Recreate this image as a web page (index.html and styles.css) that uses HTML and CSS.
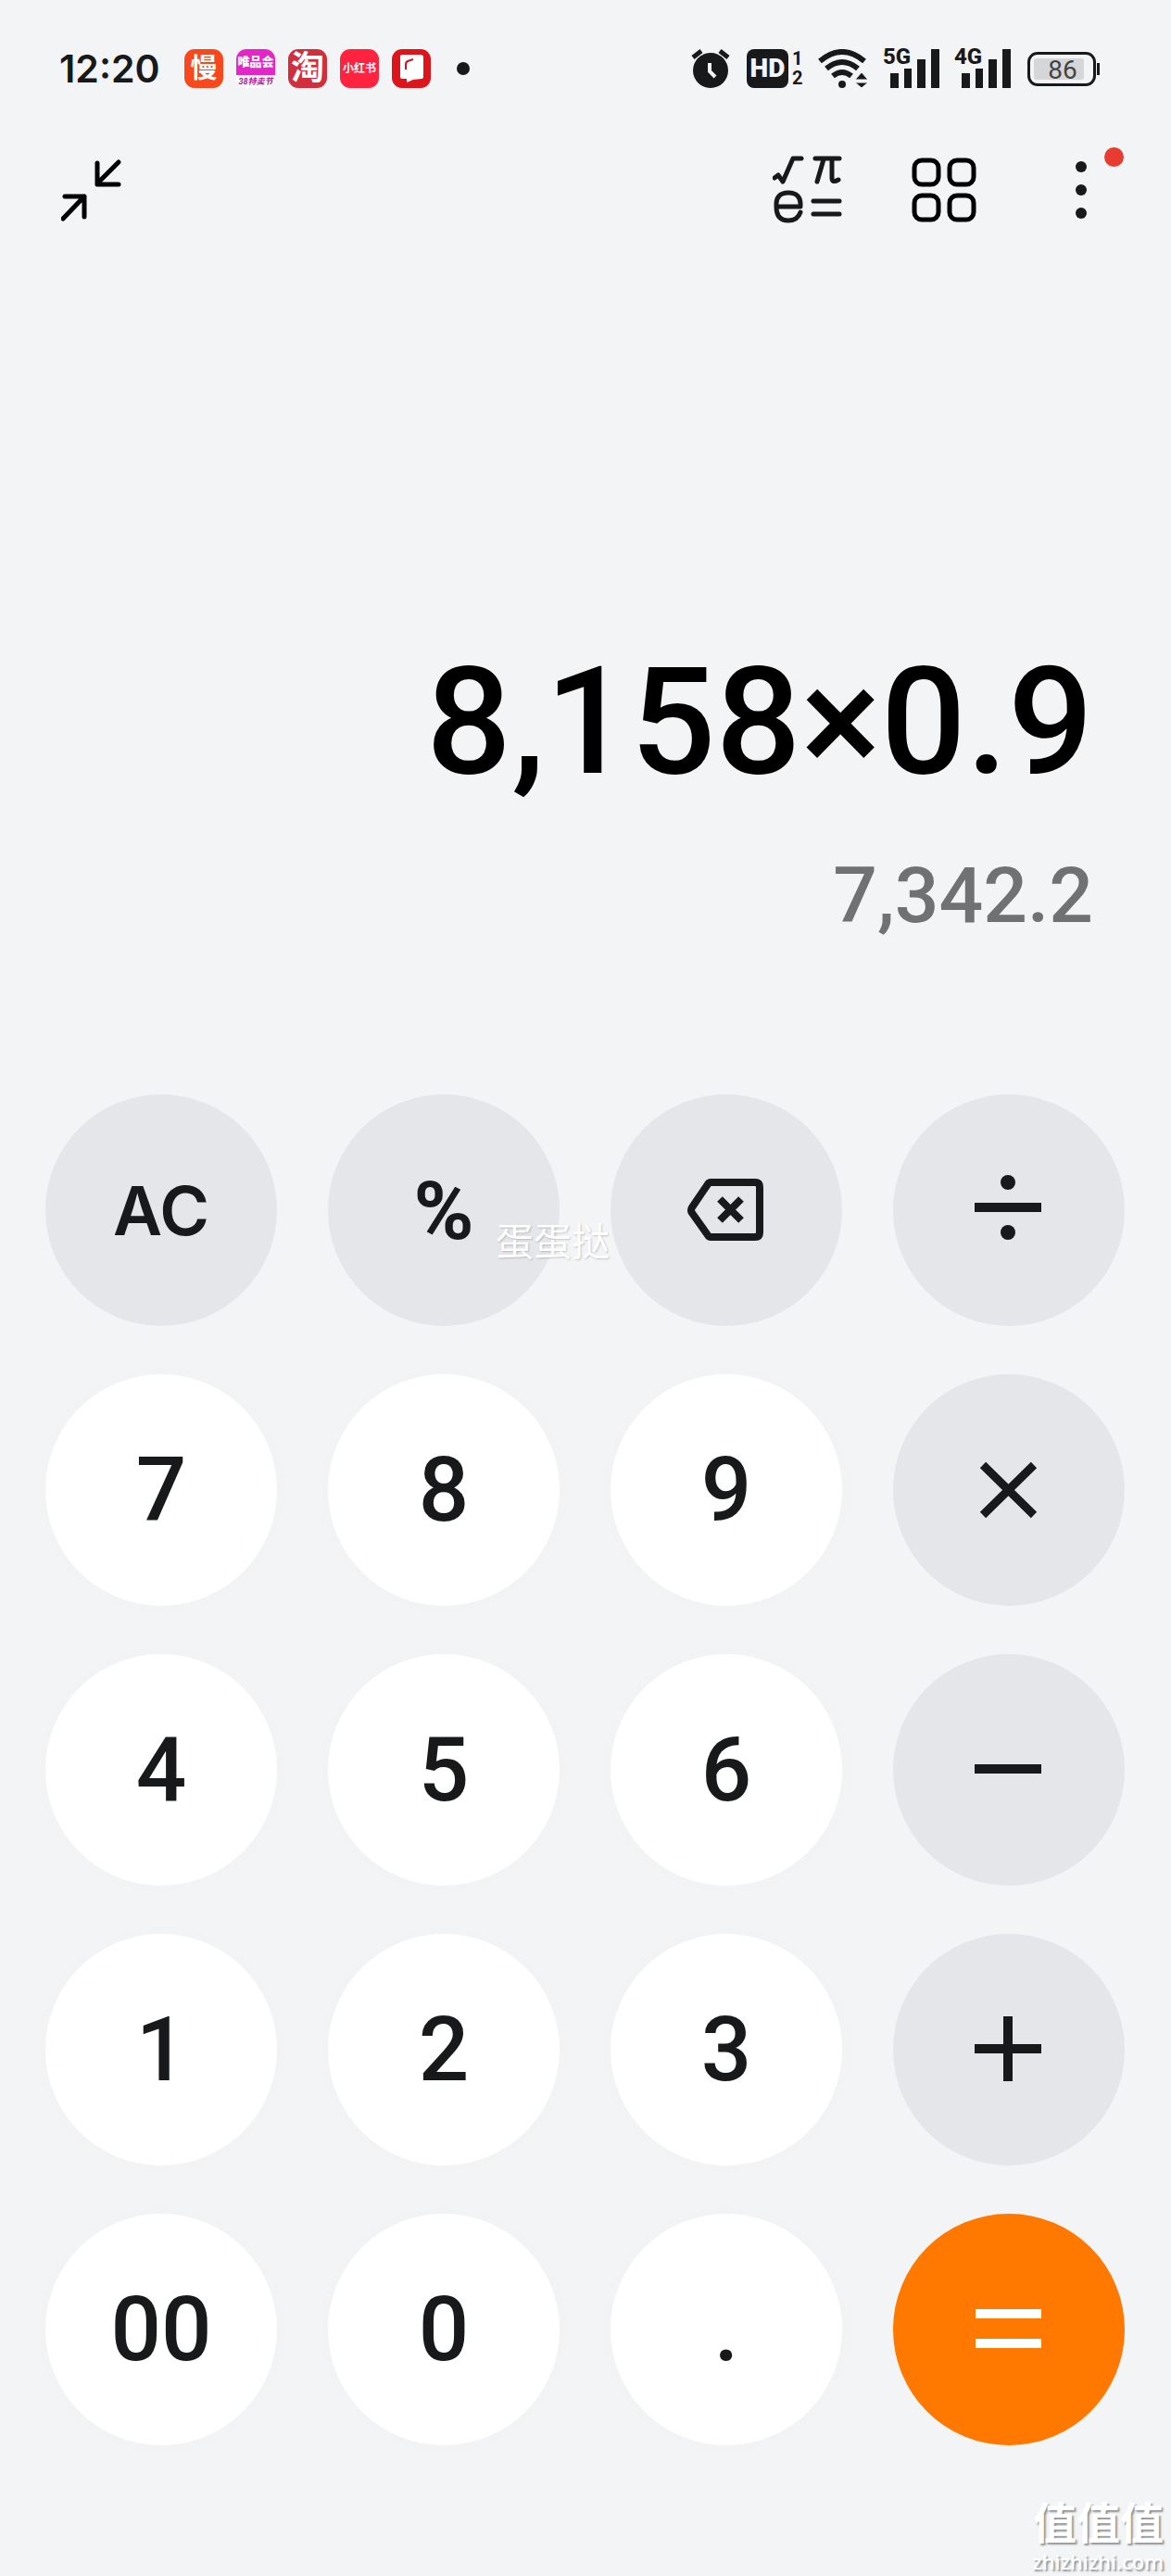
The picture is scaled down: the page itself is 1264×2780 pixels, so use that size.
FILE: index.html
```html
<!DOCTYPE html>
<html lang="zh-CN">
<head>
    <meta charset="UTF-8">
    <meta name="viewport" content="width=device-width, initial-scale=1">
    <title>计算器</title>
    <link rel="stylesheet" href="styles.css">
</head>
<body>
    <div class="screen">
        <header class="status">
            <div class="status-left">
                <span class="clock">12:20</span>
                <div class="apps">
                    <span class="app app-man">慢</span>
                    <span class="app app-vip"><b>唯品会</b><i>38特卖节</i></span>
                    <span class="app app-tao">淘</span>
                    <span class="app app-xhs">小红书</span>
                    <span class="app app-book">
                        <svg width="42" height="42" viewBox="0 0 42 42"><path d="M9 8q0-2 2-2h20q3 0 3 3v21q0 2-2 2l-9 1-7 3v-4H11q-2 0-2-2z" fill="#fff"/><path d="M15 22v-6q0-2 2-3l6-2" fill="none" stroke="#c81a20" stroke-width="2"/></svg>
                    </span>
                </div>
                <span class="more-dot"></span>
            </div>
            <div class="status-right">
                <!-- alarm -->
                <svg width="42" height="42" viewBox="0 0 42 42">
                    <circle cx="21" cy="23" r="19" fill="#17191a"/>
                    <path d="M2 9l9-7M40 9l-9-7" stroke="#17191a" stroke-width="5"/>
                    <path d="M20 15v9l6 6" fill="none" stroke="#f2f4f6" stroke-width="4"/>
                </svg>
                <!-- HD -->
                <div class="hd">
                    <span class="hd-box">HD</span>
                    <span class="hd-sim"><span>1</span><span>2</span></span>
                </div>
                <!-- wifi -->
                <svg width="54" height="42" viewBox="0 0 54 42">
                    <g fill="none" stroke="#17191a" stroke-width="6">
                        <path d="M2 13Q26-7 50 13"/>
                        <path d="M9 21q17-14 34 0"/>
                        <path d="M16 29q10-8 20 0"/>
                    </g>
                    <circle cx="26" cy="38" r="4" fill="#17191a"/>
                    <path d="M47 25l7 8H40zM47 42l7-6H40z" fill="#17191a" stroke="#f2f4f6" stroke-width="1"/>
                </svg>
                <div class="signal">
                    <span class="net">5G</span>
                    <svg width="54" height="42" viewBox="0 0 54 42"><path d="M1 26h9v16H1zM16 21h8v21h-8zM30 11h9v31h-9zM45 0h9v42h-9z" fill="#17191a"/></svg>
                </div>
                <div class="signal">
                    <span class="net">4G</span>
                    <svg width="54" height="42" viewBox="0 0 54 42"><path d="M1 26h9v16H1zM16 21h8v21h-8zM30 11h9v31h-9zM45 0h9v42h-9z" fill="#17191a"/></svg>
                </div>
                <div class="battery"><span class="battery-level">86</span></div>
            </div>
        </header>

        <nav class="toolbar">
            <button type="button" class="tool" aria-label="小窗">
                <svg width="66" height="68" viewBox="0 0 66 68" fill="none" stroke="#000" stroke-width="5" stroke-linecap="round" stroke-linejoin="round">
                    <path d="M62 4L39 27M39 5v23h23"/>
                    <path d="M2 65l23-24M4 41h21v22"/>
                </svg>
            </button>
            <div class="tools">
                <button type="button" class="tool" aria-label="科学计算">
                    <svg width="76" height="74" viewBox="0 0 76 74" fill="none" stroke="#17191a" stroke-width="5" stroke-linecap="round" stroke-linejoin="round">
                        <path d="M2 24l4-3 5 7L22 3h9"/>
                        <path d="M46 3h26M55 4l-7 24M64 4v20q0 6 7 2"/>
                        <path d="M4 55h26q1-15-13-15T4 55q0 15 13 15 10 0 13-9"/>
                        <path d="M44 49h28M44 63h28"/>
                    </svg>
                </button>
                <button type="button" class="tool" aria-label="换算">
                    <svg width="70" height="70" viewBox="0 0 70 70" fill="none" stroke="#000" stroke-width="5">
                        <rect x="3" y="3" width="26" height="26" rx="8"/>
                        <rect x="41" y="3" width="26" height="26" rx="8"/>
                        <rect x="3" y="41" width="26" height="26" rx="8"/>
                        <rect x="41" y="41" width="26" height="26" rx="8"/>
                    </svg>
                </button>
                <button type="button" class="tool tool-menu" aria-label="更多">
                    <svg width="12" height="64" viewBox="0 0 12 64" fill="#17191a">
                        <circle cx="6" cy="7" r="6"/><circle cx="6" cy="32" r="6"/><circle cx="6" cy="57" r="6"/>
                    </svg>
                    <span class="badge"></span>
                </button>
            </div>
        </nav>

        <main class="calc">
            <section class="display">
                <output class="expression">8,158×0.9</output>
                <output class="result">7,342.2</output>
            </section>

            <section class="keypad">
                <button type="button" class="key key-fn key-ac">AC</button>
                <button type="button" class="key key-fn key-percent">%</button>
                <button type="button" class="key key-fn" aria-label="删除">
                    <svg width="88" height="88" viewBox="0 0 88 88" fill="none" stroke="#17191a" stroke-width="8" stroke-linejoin="round">
                        <path d="M27 14h48q5 0 5 5v49q0 5-5 5H27q-2 0-3-2L7 47q-2-3 0-6l17-25q1-2 3-2z"/>
                        <path d="M37 32l23 23M60 32L37 55"/>
                    </svg>
                </button>
                <button type="button" class="key key-fn" aria-label="除">
                    <svg width="88" height="88" viewBox="0 0 88 88" fill="#17191a">
                        <path d="M7 36h72v10H7z"/><circle cx="43" cy="14" r="8"/><circle cx="43" cy="68" r="8"/>
                    </svg>
                </button>

                <button type="button" class="key">7</button>
                <button type="button" class="key">8</button>
                <button type="button" class="key">9</button>
                <button type="button" class="key key-fn" aria-label="乘">
                    <svg width="88" height="88" viewBox="0 0 88 88" stroke="#17191a" stroke-width="9"><path d="M16 17l55 54M71 17L16 71"/></svg>
                </button>

                <button type="button" class="key">4</button>
                <button type="button" class="key">5</button>
                <button type="button" class="key">6</button>
                <button type="button" class="key key-fn" aria-label="减">
                    <svg width="88" height="88" viewBox="0 0 88 88" fill="#17191a"><path d="M7 38h72v10H7z"/></svg>
                </button>

                <button type="button" class="key">1</button>
                <button type="button" class="key">2</button>
                <button type="button" class="key">3</button>
                <button type="button" class="key key-fn" aria-label="加">
                    <svg width="88" height="88" viewBox="0 0 88 88" fill="#17191a"><path d="M7 38h72v10H7z"/><path d="M38 8h10v70H38z"/></svg>
                </button>

                <button type="button" class="key">00</button>
                <button type="button" class="key">0</button>
                <button type="button" class="key">.</button>
                <button type="button" class="key key-equal" aria-label="等于">
                    <svg width="88" height="88" viewBox="0 0 88 88" fill="#fff"><path d="M8 22h71v10H8zM8 54h71v10H8z"/></svg>
                </button>
            </section>
        </main>

        <span class="mark-user">蛋蛋挞</span>
        <div class="mark-site">
            <span class="mark-logo">值值值</span>
            <span class="mark-url">zhizhizhi.com</span>
        </div>
    </div>
</body>
</html>
```
FILE: styles.css
```css
* {
    box-sizing: border-box;
}

body {
    margin: 0;
    background-color: #f2f4f6;
    color: #17191a;
    font-family: Roboto, "Noto Sans CJK SC", sans-serif;
}

button {
    padding: 0;
    border: 0;
    background: none;
    color: inherit;
    font: inherit;
    cursor: pointer;
}

svg {
    display: block;
}

.screen {
    position: relative;
    display: flex;
    flex-direction: column;
    min-height: 100vh;
}

/* Status bar */
.status {
    display: flex;
    justify-content: space-between;
    align-items: center;
    height: 148px;
    padding: 0 81px 0 64px;
}

.status-left,
.status-right,
.apps {
    display: flex;
    align-items: center;
}

.status-right {
    gap: 18px;
}

.clock {
    width: 135px;
    font-family: Inter, sans-serif;
    font-size: 41px;
    font-weight: 600;
    line-height: 42px;
}

.apps {
    gap: 14px;
}

.app {
    display: flex;
    flex-direction: column;
    align-items: center;
    justify-content: center;
    width: 42px;
    height: 42px;
    border-radius: 11px;
    color: #fff;
    font-weight: 700;
    line-height: 42px;
    white-space: nowrap;
}

.app-man {
    background-color: #f8491e;
    font-size: 29px;
}

.app-vip {
    justify-content: flex-start;
    background: linear-gradient(#e426c8 0 66%, #fff 66%);
    font-size: 13px;
    line-height: 28px;
}

.app-vip i {
    color: #b0209a;
    font-size: 9px;
    line-height: 14px;
}

.app-tao {
    background-color: #d0303c;
    font-size: 36px;
}

.app-xhs {
    background-color: #ff2340;
    font-size: 12px;
}

.app-book {
    background-color: #dc141c;
}

.more-dot {
    width: 14px;
    height: 14px;
    margin-left: 28px;
    border-radius: 50%;
    background-color: #17191a;
}

.hd {
    display: flex;
    gap: 4px;
}

.hd-box {
    width: 45px;
    height: 42px;
    border-radius: 8px;
    background-color: #17191a;
    color: #f2f4f6;
    font-size: 28px;
    font-weight: 900;
    line-height: 42px;
    text-align: center;
}

.hd-sim {
    display: flex;
    flex-direction: column;
    width: 10px;
    font-size: 20px;
    font-weight: 700;
    line-height: 21px;
}

.signal {
    position: relative;
    padding-left: 5px;
}

.net {
    position: absolute;
    top: -2px;
    left: -2px;
    font-size: 24px;
    font-weight: 800;
    line-height: 20px;
}

.battery {
    position: relative;
    width: 74px;
    height: 37px;
    padding: 4px;
    border: 3px solid #17191a;
    border-radius: 11px;
}

.battery::after {
    content: "";
    position: absolute;
    top: 9px;
    right: -7px;
    width: 3px;
    height: 13px;
    background-color: #17191a;
}

.battery-level {
    display: block;
    width: 54px;
    height: 23px;
    padding-left: 8px;
    border-radius: 3px;
    background-color: #d5d6d8;
    color: #444;
    font-size: 28px;
    line-height: 25px;
    text-align: center;
}

/* Toolbar */
.toolbar {
    display: flex;
    justify-content: space-between;
    align-items: center;
    height: 114px;
    padding: 0 91px 0 66px;
}

.tools {
    display: flex;
    align-items: center;
    gap: 74px;
}

.tool-menu {
    position: relative;
    margin-left: 33px;
}

.badge {
    position: absolute;
    top: -14px;
    right: -40px;
    width: 21px;
    height: 21px;
    border-radius: 50%;
    background-color: #e83c30;
}

/* Calculator */
.calc {
    flex: 1;
    display: flex;
    flex-direction: column;
}

.display {
    flex: 1;
    display: flex;
    flex-direction: column;
    justify-content: flex-end;
    align-items: flex-end;
    gap: 42px;
    padding: 0 84px 164px;
    font-weight: 500;
}

.expression {
    color: #000;
    font-size: 162px;
    line-height: 192px;
}

.result {
    color: #707173;
    font-size: 84px;
    line-height: 100px;
}

.keypad {
    display: grid;
    grid-template-columns: repeat(4, 1fr);
    gap: 52px 55px;
    padding: 0 50px 141px 49px;
}

.key {
    display: flex;
    align-items: center;
    justify-content: center;
    aspect-ratio: 1;
    border-radius: 50%;
    background-color: #fff;
    box-shadow: 0 0 40px rgba(0, 0, 0, 0.01);
    font-size: 96px;
    font-weight: 500;
}

.key-fn {
    background-color: #e5e6ea;
    box-shadow: none;
}

.key-ac {
    font-family: Inter, sans-serif;
    font-size: 73px;
    font-weight: 600;
}

.key-percent {
    font-size: 88px;
    font-weight: 700;
}

.key-equal {
    background-color: #ff7800;
    box-shadow: none;
}

/* Watermarks */
.mark-user,
.mark-site {
    position: absolute;
    color: #fff;
    font-family: "Noto Sans CJK SC", sans-serif;
    pointer-events: none;
}

.mark-user {
    top: 1317px;
    left: 535px;
    font-size: 41px;
    line-height: 41px;
    text-shadow: 1px 1px 2px rgba(0, 0, 0, 0.2);
}

.mark-site {
    right: 8px;
    bottom: 3px;
    display: flex;
    flex-direction: column;
    align-items: flex-end;
    gap: 4px;
    text-shadow: 2px 2px 2px rgba(0, 0, 0, 0.4);
}

.mark-logo {
    font-size: 47px;
    font-weight: 700;
    line-height: 54px;
}

.mark-url {
    font-family: "Noto Sans", sans-serif;
    font-size: 22px;
    font-weight: 500;
    line-height: 26px;
}
```
